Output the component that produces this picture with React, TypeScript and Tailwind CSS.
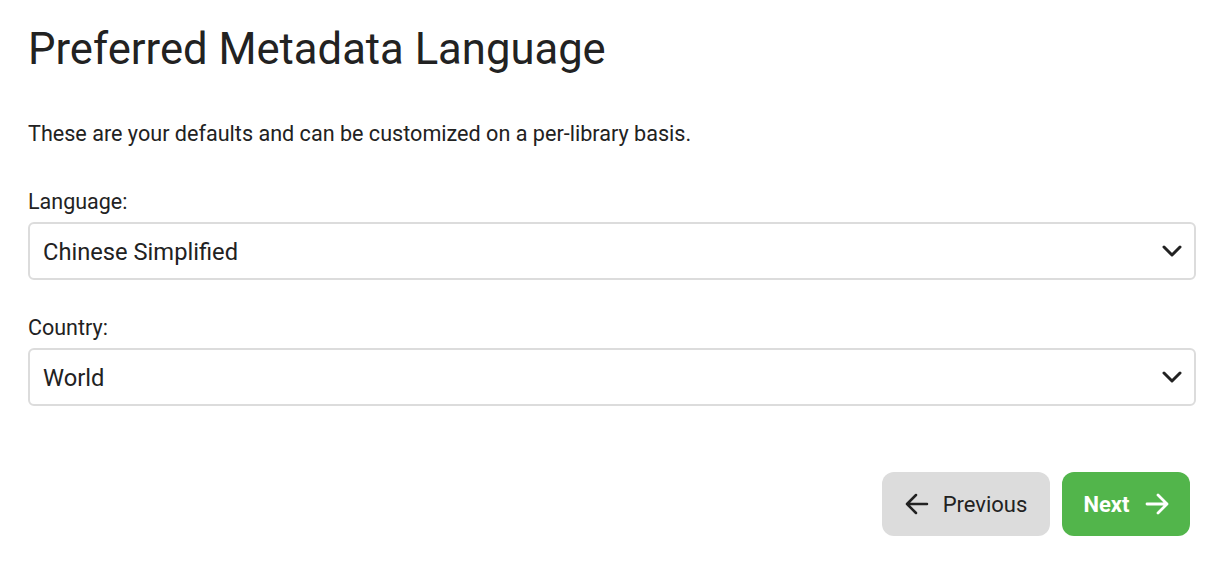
const Chevron = () => (
	<svg width="20" height="12" viewBox="0 0 20 12" fill="none" stroke="#222" strokeWidth="3" strokeLinecap="round" strokeLinejoin="round">
		<path d="M2 2l8 8 8-8" />
	</svg>
)

const SelectField = ({ label, value }: { label: string; value: string }) => (
	<div className="flex flex-col">
		<label className="mb-[7px] text-[21.5px] leading-[26px] text-[#222]">{label}</label>
		<div className="flex h-[58px] items-center justify-between rounded-[6px] border-2 border-[#dcdcdc] bg-white pl-[13px] pr-[12px]">
			<span className="pt-[3px] text-[23.7px] text-[#222]">{value}</span>
			<Chevron />
		</div>
	</div>
)

const App = () => {
	return (
		<div className="min-h-screen bg-white pl-[28px] pr-[16px] pt-[22px]" style={{ fontFamily: 'Roboto, sans-serif' }}>
			<h1 className="text-[43.6px] font-normal leading-[56px] text-[#222]">Preferred Metadata Language</h1>
			<p className="mt-[42px] text-[21.6px] leading-[28px] text-[#222]">
				These are your defaults and can be customized on a per-library basis.
			</p>
			<div className="mt-[41px] flex flex-col gap-[35px]">
				<SelectField label="Language:" value="Chinese Simplified" />
				<SelectField label="Country:" value="World" />
			</div>
			<div className="mt-[66px] flex justify-end gap-[12px] pr-[6px]">
				<button className="flex h-[64px] w-[168px] items-center justify-center gap-[14px] rounded-[12px] bg-[#dcdcdc] text-[22px] font-normal text-[#222]">
					<svg width="24" height="22" viewBox="0 0 24 22" fill="none" stroke="#222" strokeWidth="2.5" strokeLinecap="round" strokeLinejoin="round">
						<path d="M22 11H2M11 2l-9 9 9 9" />
					</svg>
					Previous
				</button>
				<button className="flex h-[64px] w-[128px] items-center justify-center gap-[15px] rounded-[12px] bg-[#52b54b] text-[22px] font-bold text-white">
					Next
					<svg width="24" height="22" viewBox="0 0 24 22" fill="none" stroke="#fff" strokeWidth="2.8" strokeLinecap="round" strokeLinejoin="round">
						<path d="M2 11h20M13 2l9 9-9 9" />
					</svg>
				</button>
			</div>
		</div>
	)
}

export default App
